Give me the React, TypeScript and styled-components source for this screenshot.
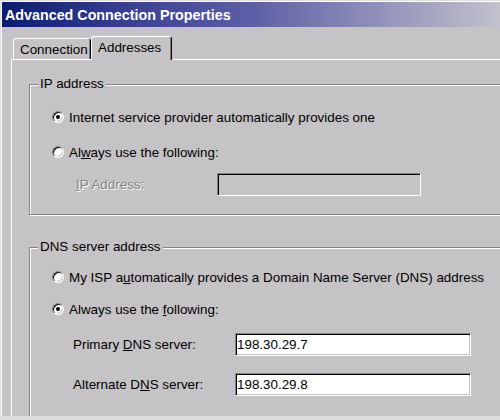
import styled, { createGlobalStyle } from 'styled-components'

const GlobalStyle = createGlobalStyle`
  html, body {
    margin: 0;
    padding: 0;
    background: #c6c3c6;
    overflow: hidden;
  }
  body {
    font-family: 'Liberation Sans', Arial, sans-serif;
    font-size: 13.4px;
    color: #000;
  }
`

const Window = styled.div`
  width: 500px;
  height: 420px;
  box-sizing: border-box;
  overflow: hidden;
  background: #c6c3c6;
  border-top: 1px solid #dfdfdf;
  border-left: 1px solid #dfdfdf;
  border-bottom: 4px solid #dedcde;
  box-shadow: inset 1px 1px 0 #fff;
  padding: 1px 0 0 1px;
`

const TitleBar = styled.div`
  height: 25px;
  display: flex;
  align-items: center;
  padding-left: 3px;
  background: linear-gradient(to right, #0a1c70 0%, #3a3f92 25%, #5e5ea8 50%, #908fba 75%, #c2c1cc 100%);
  color: #fff;
  font-weight: bold;
  font-size: 14.3px;
  white-space: nowrap;
`

const Body = styled.div`
  padding: 9px 0 0 9px;
`

const TabRow = styled.div`
  display: flex;
  align-items: flex-end;
  padding-left: 2px;
  position: relative;
  z-index: 1;
`

const Tab = styled.div<{ $active?: boolean }>`
  box-sizing: border-box;
  display: flex;
  align-items: center;
  width: ${(p) => (p.$active ? 81 : 78)}px;
  height: ${(p) => (p.$active ? 24 : 21)}px;
  margin-bottom: ${(p) => (p.$active ? -1 : 0)}px;
  padding: 0 0 ${(p) => (p.$active ? 2 : 0)}px 6px;
  background: #c6c3c6;
  border-top: 1px solid #fff;
  border-left: 1px solid #fff;
  border-right: 1px solid #000;
  border-radius: 3px 3px 0 0;
  box-shadow: inset -1px 0 0 #848284;
`

const Panel = styled.div`
  width: 560px;
  height: 400px;
  background: #c6c3c6;
  border-top: 1px solid #fff;
  border-left: 1px solid #fff;
  padding: 24px 0 0 17px;
  display: flex;
  flex-direction: column;
`

const GroupBox = styled.div<{ $top?: number; $bottom: number }>`
  width: 520px;
  margin-top: ${(p) => p.$top ?? 0}px;
  padding-bottom: ${(p) => p.$bottom}px;
  border: 1px solid #848284;
  box-shadow: inset 1px 1px 0 #fff, 1px 1px 0 #fff;
`

const Caption = styled.div`
  width: fit-content;
  margin: -9px 0 0 8px;
  padding: 0 2px;
  line-height: 16px;
  background: #c6c3c6;
`

const OptionRow = styled.label<{ $gap: number }>`
  display: flex;
  align-items: center;
  gap: 5px;
  height: 20px;
  margin-top: ${(p) => p.$gap}px;
  padding-left: 22px;
  white-space: nowrap;
`

const Radio = styled.span<{ $checked?: boolean }>`
  position: relative;
  flex: none;
  width: 12px;
  height: 12px;
  box-sizing: border-box;
  border-radius: 50%;
  background: #fff;
  border: 1px solid;
  border-color: #848284 #fff #fff #848284;
  box-shadow: inset 1px 1px 0 #000, inset -1px -1px 0 #c6c3c6;

  &::after {
    content: '';
    display: ${(p) => (p.$checked ? 'block' : 'none')};
    position: absolute;
    left: 3px;
    top: 3px;
    width: 4px;
    height: 4px;
    border-radius: 50%;
    background: #000;
  }
`

const FieldRow = styled.div<{ $gap: number; $indent: number }>`
  display: flex;
  align-items: center;
  margin-top: ${(p) => p.$gap}px;
  padding-left: ${(p) => p.$indent}px;
`

const FieldLabel = styled.span<{ $width: number; $disabled?: boolean }>`
  width: ${(p) => p.$width}px;
  white-space: nowrap;
  color: ${(p) => (p.$disabled ? '#848284' : '#000')};
  text-shadow: ${(p) => (p.$disabled ? '1px 1px 0 #fff' : 'none')};
`

const TextBox = styled.div<{ $width: number; $disabled?: boolean }>`
  box-sizing: border-box;
  width: ${(p) => p.$width}px;
  height: 23px;
  display: flex;
  align-items: center;
  padding-left: 1px;
  background: ${(p) => (p.$disabled ? '#c6c3c6' : '#fff')};
  border: 1px solid;
  border-color: #848284 #fff #fff #848284;
  box-shadow: inset 1px 1px 0 #000, inset -1px -1px 0 #c6c3c6;
`

export default function App() {
  return (
    <>
      <GlobalStyle />
      <Window>
        <TitleBar>Advanced Connection Properties</TitleBar>
        <Body>
          <TabRow>
            <Tab>Connection</Tab>
            <Tab $active>Addresses</Tab>
          </TabRow>
          <Panel>
            <GroupBox $bottom={18}>
              <Caption>IP address</Caption>
              <OptionRow $gap={15}>
                <Radio $checked />
                Internet service provider automatically provides one
              </OptionRow>
              <OptionRow $gap={15}>
                <Radio />
                <span>
                  Al<u>w</u>ays use the following:
                </span>
              </OptionRow>
              <FieldRow $gap={11} $indent={46}>
                <FieldLabel $width={141} $disabled>
                  <u>I</u>P Address:
                </FieldLabel>
                <TextBox $width={204} $disabled />
              </FieldRow>
            </GroupBox>

            <GroupBox $top={32} $bottom={40}>
              <Caption>DNS server address</Caption>
              <OptionRow $gap={12}>
                <Radio />
                <span>
                  My ISP a<u>u</u>tomatically provides a Domain Name Server (DNS) address
                </span>
              </OptionRow>
              <OptionRow $gap={12}>
                <Radio $checked />
                <span>
                  Always use the <u>f</u>ollowing:
                </span>
              </OptionRow>
              <FieldRow $gap={14} $indent={43}>
                <FieldLabel $width={162}>
                  Primary <u>D</u>NS server:
                </FieldLabel>
                <TextBox $width={236}>198.30.29.7</TextBox>
              </FieldRow>
              <FieldRow $gap={17} $indent={43}>
                <FieldLabel $width={162}>
                  Alternate D<u>N</u>S server:
                </FieldLabel>
                <TextBox $width={236}>198.30.29.8</TextBox>
              </FieldRow>
            </GroupBox>
          </Panel>
        </Body>
      </Window>
    </>
  )
}
